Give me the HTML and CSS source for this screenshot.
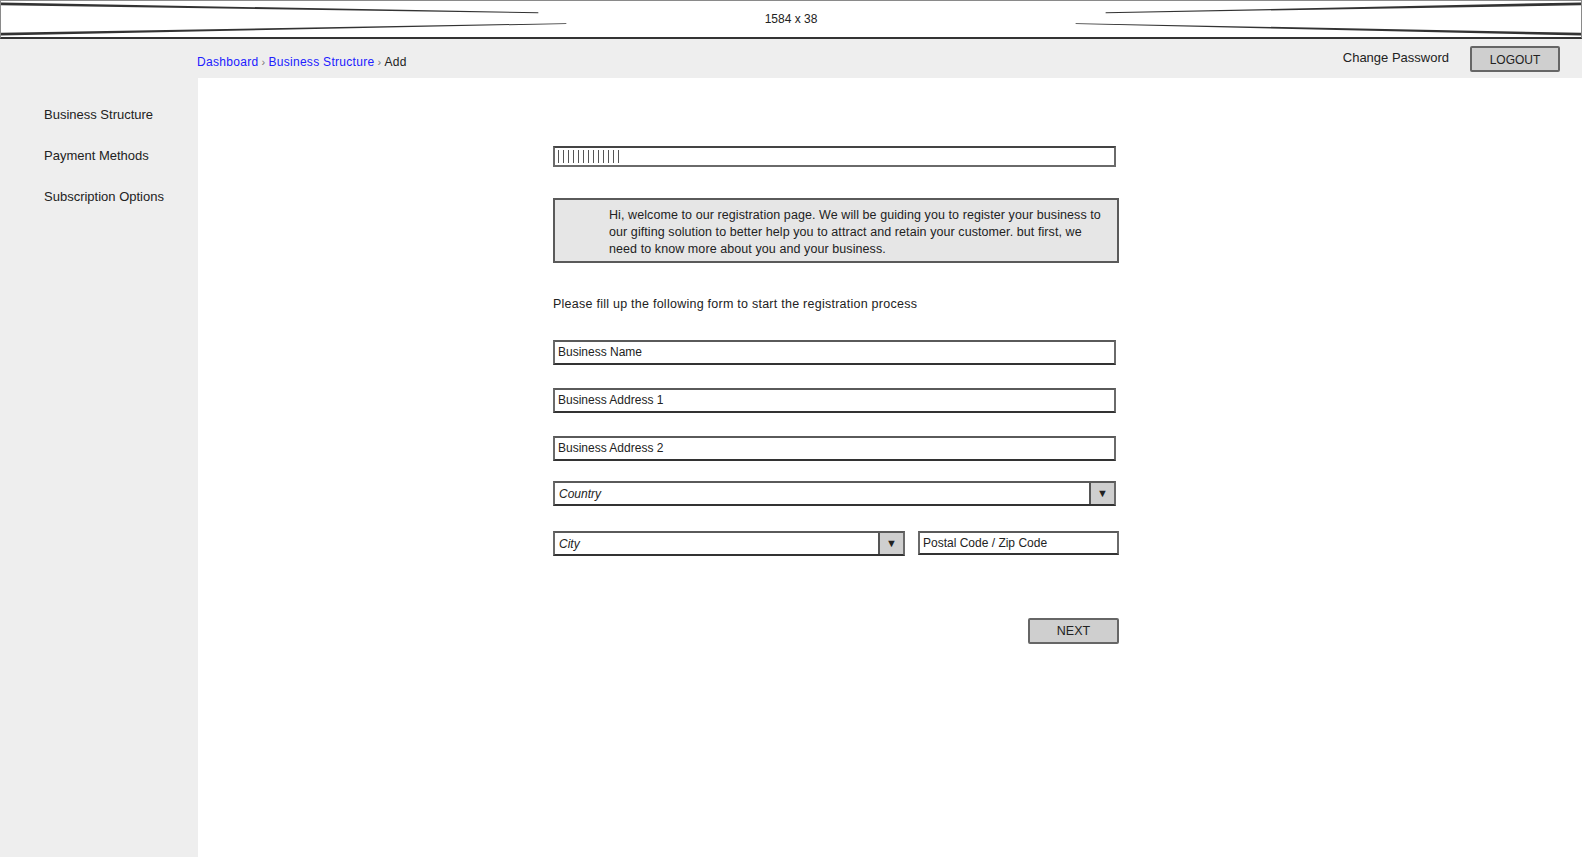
FILE: index.html
```html
<!DOCTYPE html>
<html>
<head>
<meta charset="utf-8">
<link rel="stylesheet" href="styles.css">
</head>
<body>
<div class="topbar">
  <svg class="topbar-x" viewBox="0 0 1582 38" preserveAspectRatio="none">
    <polygon points="0,1.5 0,4.5 538,12.8 538,12" fill="#333"/>
    <polygon points="0,33.5 0,36.5 566,24.2 566,23.4" fill="#333"/>
    <polygon points="1582,1.5 1582,4.5 1106,12.8 1106,12" fill="#333"/>
    <polygon points="1582,33.5 1582,36.5 1076,24.2 1076,23.4" fill="#333"/>
  </svg>
  <span class="topbar-label">1584 x 38</span>
</div>
<div class="header">
  <nav class="crumbs"><a class="crumb-link">Dashboard</a><span class="sep">›</span><a class="crumb-link">Business Structure</a><span class="sep">›</span><span class="crumb-cur">Add</span></nav>
  <div class="account">
    <span class="change-pw">Change Password</span>
    <button class="btn logout">LOGOUT</button>
  </div>
</div>
<div class="body">
  <aside class="sidebar">
    <div class="side-item">Business Structure</div>
    <div class="side-item">Payment Methods</div>
    <div class="side-item">Subscription Options</div>
  </aside>
  <main class="main">
    <div class="form">
      <div class="progress"><div class="progress-fill"></div></div>
      <div class="info">Hi, welcome to our registration page. We will be guiding you to register your business to<br>our gifting solution to better help you to attract and retain your customer. but first, we<br>need to know more about you and your business.</div>
      <p class="lead">Please fill up the following form to start the registration process</p>
      <div class="field f-name">Business Name</div>
      <div class="field f-addr1">Business Address 1</div>
      <div class="field f-addr2">Business Address 2</div>
      <div class="field select f-country"><span class="sel-text">Country</span><span class="sel-btn">▼</span></div>
      <div class="row">
        <div class="field select f-city"><span class="sel-text">City</span><span class="sel-btn">▼</span></div>
        <div class="field f-postal">Postal Code / Zip Code</div>
      </div>
      <div class="actions"><button class="btn next">NEXT</button></div>
    </div>
  </main>
</div>
</body>
</html>
```

FILE: styles.css
```css
* { box-sizing: border-box; }
html, body { margin: 0; padding: 0; }
body {
  font-family: "Liberation Sans", Arial, sans-serif;
  color: #222;
  background: #fff;
  width: 1582px;
  height: 857px;
  overflow: hidden;
  display: flex;
  flex-direction: column;
}
.topbar {
  position: relative;
  height: 39px;
  border: 1px solid #8a8a8a;
  border-bottom: 2px solid #333;
  background: #fff;
  flex: none;
}
.topbar-x { display: block; width: 100%; height: 100%; }
.topbar-label {
  position: absolute;
  left: 0; right: 0; top: 0; bottom: 0;
  display: flex; align-items: center; justify-content: center;
  font-size: 12px;
  color: #222;
}
.header {
  height: 39px;
  background: #eeeeee;
  display: flex;
  align-items: center;
  justify-content: space-between;
  padding-left: 197px;
  padding-right: 22px;
  flex: none;
}
.crumbs { font-size: 12px; padding-top: 6px; letter-spacing: 0.3px; }
.crumb-link { color: #2020ff; }
.crumb-cur { color: #222; }
.sep { color: #777; margin: 0 3px; font-size: 11px; }
.account { display: flex; align-items: center; gap: 21px; }
.change-pw { font-size: 13px; color: #222; padding-bottom: 2px; }
.btn {
  font-family: "Liberation Sans", Arial, sans-serif;
  font-size: 12px;
  color: #222;
  background: #cfcfcf;
  border: 2px solid #666;
  border-radius: 2px;
  padding: 0;
  cursor: pointer;
}
.logout { width: 90px; height: 26px; padding-top: 2px; }
.body { flex: 1; display: flex; min-height: 0; }
.sidebar {
  width: 198px;
  background: #eeeeee;
  padding-top: 29px;
  padding-left: 44px;
  flex: none;
}
.side-item { font-size: 13px; color: #222; height: 41px; line-height: 16px; }
.main { flex: 1; padding-top: 68px; padding-left: 355px; }
.form { width: 566px; display: flex; flex-direction: column; }
.progress {
  width: 563px; height: 21px;
  border: 2px solid #6a6a6a;
  border-top-color: #444;
  background: #fff;
  padding: 2px 2px;
}
.progress-fill {
  width: 64px; height: 100%;
  background: repeating-linear-gradient(90deg, #555 0, #555 1px, #fff 1px, #fff 5px);
  margin-left: 1px;
}
.info {
  margin-top: 31px;
  height: 65px;
  background: #e6e6e6;
  border: 2px solid #5a5a5a;
  padding: 7px 0 0 54px;
  font-size: 12.5px;
  letter-spacing: 0.08px;
  line-height: 17px;
  white-space: nowrap;
  color: #222;
}
.lead { margin: 33px 0 0; font-size: 12.5px; letter-spacing: 0.25px; line-height: 16px; color: #222; }
.field {
  width: 563px;
  height: 25px;
  border: 2px solid #6a6a6a;
  border-top-color: #5a5a5a;
  border-bottom-color: #333;
  background: #fff;
  font-size: 12px;
  line-height: 21px;
  padding-left: 3px;
  color: #222;
  white-space: nowrap;
}
.f-name { margin-top: 28px; }
.f-addr1 { margin-top: 23px; }
.f-addr2 { margin-top: 23px; }
.f-country { margin-top: 20px; }
.select { display: flex; padding-left: 0; }
.sel-text { flex: 1; padding-left: 4px; font-style: italic; padding-top: 1px; }
.sel-btn {
  width: 25px;
  background: #cfcfcf;
  border-left: 2px solid #555;
  font-size: 11px;
  text-align: center;
  font-style: normal;
  color: #222;
}
.row { display: flex; justify-content: space-between; margin-top: 25px; }
.f-city { width: 352px; }
.f-postal { width: 201px; height: 24px; }
.actions { display: flex; justify-content: flex-end; margin-top: 62px; }
.next { width: 91px; height: 26px; font-size: 12.5px; }
```
